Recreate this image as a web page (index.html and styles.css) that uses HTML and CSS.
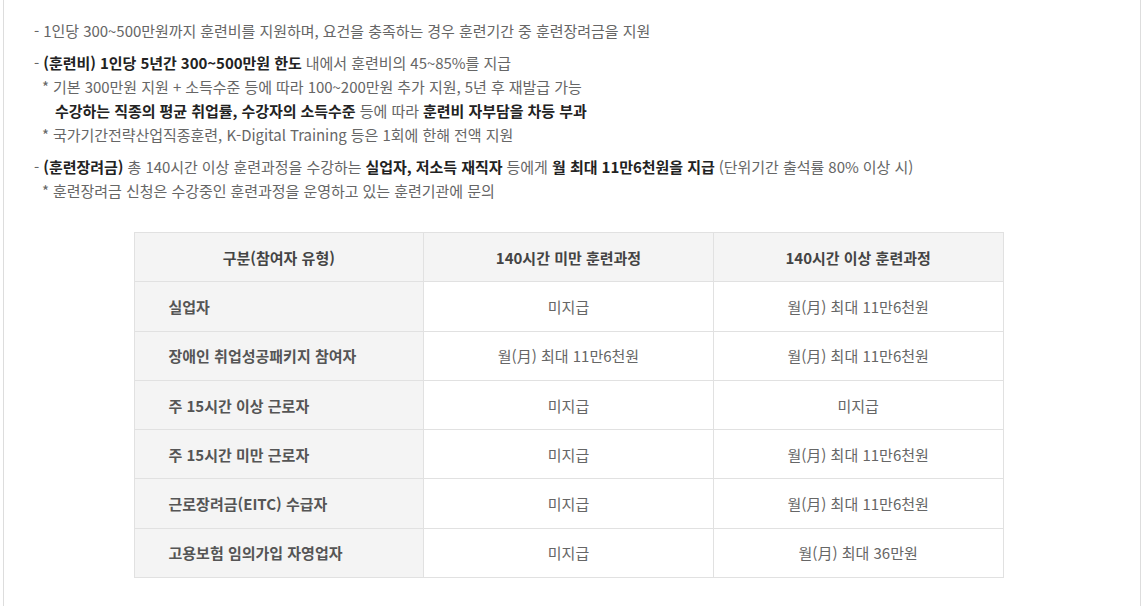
FILE: index.html
```html
<!DOCTYPE html>
<html lang="ko">
<head>
<meta charset="utf-8">
<link rel="stylesheet" href="styles.css">
</head>
<body>
<div class="page">
  <div class="content">
    <p class="line lead">- 1인당 300~500만원까지 훈련비를 지원하며, 요건을 충족하는 경우 훈련기간 중 훈련장려금을 지원</p>
    <div class="group">
      <p class="line">- <b>(훈련비) 1인당 5년간 300~500만원 한도</b> 내에서 훈련비의 45~85%를 지급</p>
      <p class="line note">* 기본 300만원 지원 + 소득수준 등에 따라 100~200만원 추가 지원, 5년 후 재발급 가능</p>
      <p class="line sub"><b>수강하는 직종의 평균 취업률, 수강자의 소득수준</b> 등에 따라 <b>훈련비 자부담을 차등 부과</b></p>
      <p class="line note">* 국가기간전략산업직종훈련, K-Digital Training 등은 1회에 한해 전액 지원</p>
    </div>
    <div class="group">
      <p class="line">- <b>(훈련장려금)</b> 총 140시간 이상 훈련과정을 수강하는 <b>실업자, 저소득 재직자</b> 등에게 <b>월 최대 11만6천원을 지급</b> (단위기간 출석률 80% 이상 시)</p>
      <p class="line note">* 훈련장려금 신청은 수강중인 훈련과정을 운영하고 있는 훈련기관에 문의</p>
    </div>
    <table class="grid">
      <thead>
        <tr><th>구분(참여자 유형)</th><th>140시간 미만 훈련과정</th><th>140시간 이상 훈련과정</th></tr>
      </thead>
      <tbody>
        <tr><th>실업자</th><td>미지급</td><td>월(月) 최대 11만6천원</td></tr>
        <tr><th>장애인 취업성공패키지 참여자</th><td>월(月) 최대 11만6천원</td><td>월(月) 최대 11만6천원</td></tr>
        <tr><th>주 15시간 이상 근로자</th><td>미지급</td><td>미지급</td></tr>
        <tr><th>주 15시간 미만 근로자</th><td>미지급</td><td>월(月) 최대 11만6천원</td></tr>
        <tr><th>근로장려금(EITC) 수급자</th><td>미지급</td><td>월(月) 최대 11만6천원</td></tr>
        <tr><th>고용보험 임의가입 자영업자</th><td>미지급</td><td>월(月) 최대 36만원</td></tr>
      </tbody>
    </table>
  </div>
</div>
</body>
</html>
```
FILE: styles.css
```css
html, body {
  margin: 0;
  padding: 0;
  background: #fff;
}
body {
  font-family: "Noto Sans CJK KR", "Noto Sans", sans-serif;
  color: #666;
  font-size: 15px;
  letter-spacing: -0.05px;
}
.page {
  margin-left: 3px;
  width: 1138px;
  min-height: 606px;
  border-left: 1px solid #ddd;
  border-right: 1px solid #ddd;
  box-sizing: border-box;
}
.content {
  padding: 19px 37px 0 30px;
}
.line {
  margin: 0;
  line-height: 24px;
}
.lead {
  margin-bottom: 8px;
}
.group {
  margin-bottom: 8px;
}
.note {
  padding-left: 8px;
}
.sub {
  padding-left: 21px;
}
b {
  color: #222;
  font-weight: 700;
}
.grid {
  margin: 29px auto 0;
  width: 870px;
  border-collapse: collapse;
  table-layout: fixed;
  font-size: 15px;
  letter-spacing: 0;
}
.grid th, .grid td {
  border: 1px solid #e1e1e1;
  height: 48.3px;
  padding: 0;
  text-align: center;
  vertical-align: middle;
}
.grid thead th {
  background: #f4f4f4;
  color: #444;
  font-weight: 700;
}
.grid tbody th {
  background: #f4f4f4;
  color: #555;
  font-weight: 700;
  text-align: left;
  padding-left: 34px;
}
.grid td {
  color: #666;
}
```
